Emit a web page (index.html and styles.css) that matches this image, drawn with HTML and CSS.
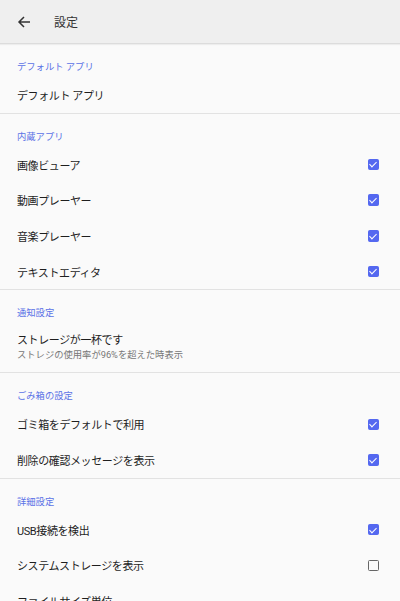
FILE: index.html
```html
<!DOCTYPE html>
<html lang="ja">
<head>
<meta charset="utf-8">
<link rel="stylesheet" href="styles.css">
</head>
<body>
<header class="bar">
  <span class="back">
    <svg width="14" height="14" viewBox="0 0 14 14"><path d="M13 7H2M7 2L2 7l5 5" fill="none" stroke="#333" stroke-width="1.5"/></svg>
  </span>
  <span class="title">設定</span>
</header>
<main class="list">
  <section class="group">
    <div class="cat">デフォルト アプリ</div>
    <div class="row"><span class="label">デフォルト アプリ</span></div>
  </section>
  <section class="group">
    <div class="cat">内蔵アプリ</div>
    <div class="row"><span class="label">画像ビューア</span><span class="cb on"></span></div>
    <div class="row"><span class="label">動画プレーヤー</span><span class="cb on"></span></div>
    <div class="row"><span class="label">音楽プレーヤー</span><span class="cb on"></span></div>
    <div class="row"><span class="label">テキストエディタ</span><span class="cb on"></span></div>
  </section>
  <section class="group">
    <div class="cat">通知設定</div>
    <div class="row two"><span class="label">ストレージが一杯です</span><span class="sub">ストレジの使用率が96%を超えた時表示</span></div>
  </section>
  <section class="group">
    <div class="cat">ごみ箱の設定</div>
    <div class="row"><span class="label">ゴミ箱をデフォルトで利用</span><span class="cb on"></span></div>
    <div class="row"><span class="label">削除の確認メッセージを表示</span><span class="cb on"></span></div>
  </section>
  <section class="group">
    <div class="cat">詳細設定</div>
    <div class="row"><span class="label">USB接続を検出</span><span class="cb on"></span></div>
    <div class="row"><span class="label">システムストレージを表示</span><span class="cb"></span></div>
    <div class="row"><span class="label">ファイルサイズ単位</span></div>
  </section>
</main>
</body>
</html>
```
FILE: styles.css
```css
html, body { margin: 0; padding: 0; }
body {
  width: 400px; height: 601px; overflow: hidden;
  background: #fafafa;
  font-family: Roboto, "Noto Sans CJK JP", sans-serif;
  color: #222;
}
.bar {
  height: 43px;
  background: #efefef;
  display: flex; align-items: center;
  border-bottom: 1px solid #dcdcdc;
  box-shadow: 0 1px 1px rgba(0,0,0,0.05);
}
.back { width: 54px; display: flex; padding-left: 17px; box-sizing: border-box; }
.back svg { display: block; }
.title { font-size: 12px; color: #333; }
.group { border-bottom: 1px solid #e2e2e2; }
.group:last-child { border-bottom: none; }
.cat {
  font-size: 9.3px; color: #5a72e6;
  padding: 16px 17px 0;
  height: 17px; line-height: 13px;
  box-sizing: content-box;
}
.row {
  height: 35.7px; display: flex; align-items: center;
  padding: 0 21px 0 17px;
  justify-content: space-between;
}
.row .label { font-size: 11px; letter-spacing: -0.4px; color: #1e1e1e; }
.row.two { flex-direction: column; align-items: flex-start; justify-content: center; height: 49px; }
.row.two .label { line-height: 14px; }
.sub { font-size: 9.3px; color: #777; line-height: 13px; }
.cb {
  width: 11.5px; height: 11.5px; box-sizing: border-box;
  border: 1.5px solid #666; border-radius: 1.5px;
  position: relative;
}
.cb.on { background: #5468f0; border-color: #5468f0; }
.cb.on::after {
  content: ""; position: absolute;
  left: 2.7px; top: 0.6px; width: 3px; height: 6px;
  border: solid #fff; border-width: 0 1.5px 1.5px 0;
  transform: rotate(45deg);
}
```
